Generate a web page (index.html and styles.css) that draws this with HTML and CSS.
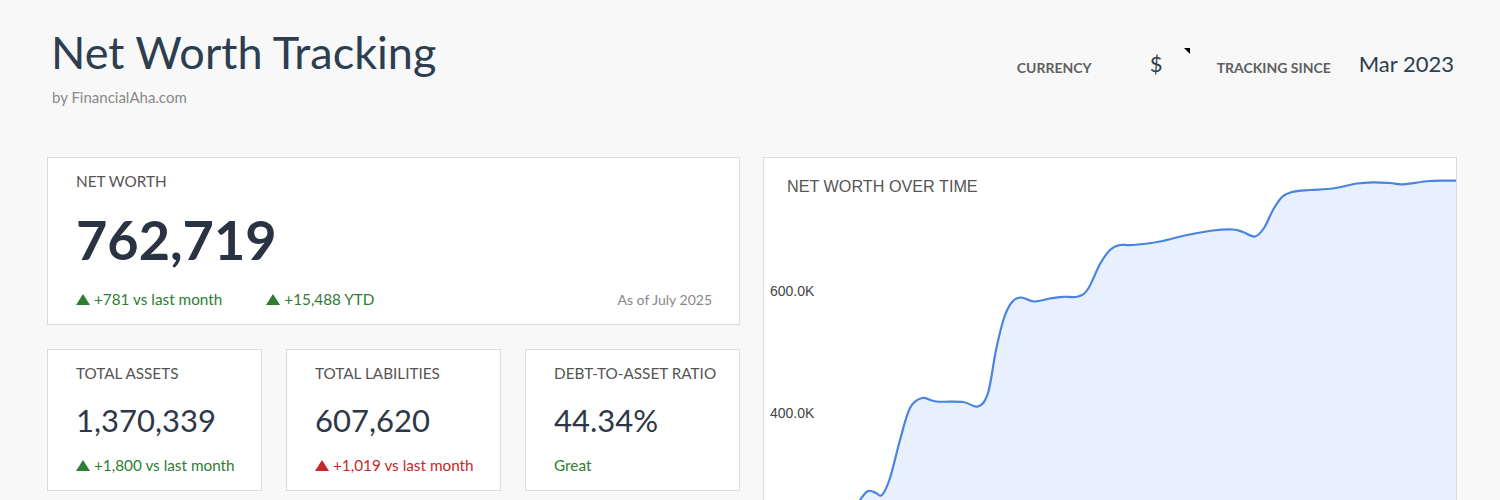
FILE: index.html
```html
<!DOCTYPE html>
<html lang="en">
<head>
  <meta charset="UTF-8">
  <title>Net Worth Tracking | FinancialAha</title>
  <meta name="viewport" content="width=device-width, initial-scale=1.0">
  <link rel="stylesheet" href="styles.css">
</head>
<body>

<header class="top">
  <div class="brand">
    <h1>Net Worth Tracking</h1>
    <p class="byline">by FinancialAha.com</p>
  </div>
  <div class="settings">
    <span class="setting-label">Currency</span>
    <span class="setting-select">$<i class="marker"></i></span>
    <span class="setting-label">Tracking since</span>
    <span class="setting-value">Mar 2023</span>
  </div>
</header>

<main class="dashboard">
  <div class="left-col">
    <section class="card card-main">
      <div class="card-label">Net Worth</div>
      <div class="big-value">762,719</div>
      <div class="stats">
        <span class="change up"><i class="tri"></i>+781 vs last month</span>
        <span class="change up"><i class="tri"></i>+15,488 YTD</span>
        <span class="as-of">As of July 2025</span>
      </div>
    </section>

    <div class="mini-row">
      <section class="card card-mini">
        <div class="card-label">Total Assets</div>
        <div class="mid-value">1,370,339</div>
        <div class="change up"><i class="tri"></i>+1,800 vs last month</div>
      </section>
      <section class="card card-mini">
        <div class="card-label">Total Labilities</div>
        <div class="mid-value">607,620</div>
        <div class="change bad"><i class="tri"></i>+1,019 vs last month</div>
      </section>
      <section class="card card-mini">
        <div class="card-label">Debt-to-Asset Ratio</div>
        <div class="mid-value">44.34%</div>
        <div class="change up">Great</div>
      </section>
    </div>
  </div>

  <section class="card card-chart">
    <svg class="chart" id="chart" width="692" height="400" viewBox="764 158 692 400">
      <path id="area" class="chart-area" d=""></path>
      <path id="line" class="chart-line" d=""></path>
      <text class="axis" x="770" y="296">600.0K</text>
      <text class="axis" x="770" y="418">400.0K</text>
    </svg>
    <h2 class="chart-title">NET WORTH OVER TIME</h2>
  </section>
</main>

<script>
// points traced in page coordinates (viewBox matches the page)
const pts = [
  [820, 640], [840, 560], [852, 515], [860, 500], [868, 491], [876, 493], [882, 495],
  [890, 478], [900, 440], [910, 408], [922, 398], [936, 401.5], [963, 402],
  [978, 406.5], [988, 393], [996, 350], [1004, 318], [1012, 302], [1021, 297.5],
  [1034, 301.5], [1050, 298.5], [1063, 296.8], [1078, 296.5], [1088, 289],
  [1100, 264], [1110, 250], [1120, 245], [1133, 245], [1160, 241.5], [1187, 235],
  [1213, 230.5], [1233, 229.5], [1243, 232], [1255, 236.5], [1264, 228],
  [1273, 210], [1282, 197], [1292, 192], [1310, 190], [1333, 188.5], [1357, 183.5],
  [1373, 182.3], [1390, 183], [1403, 184.3], [1430, 181], [1457, 180.7], [1480, 180.5]
];

function smoothPath(p) {
  let d = `M${p[0][0]},${p[0][1]}`;
  for (let i = 0; i < p.length - 1; i++) {
    const p0 = p[i - 1] || p[i], p1 = p[i], p2 = p[i + 1], p3 = p[i + 2] || p2;
    const c1 = [p1[0] + (p2[0] - p0[0]) / 6, p1[1] + (p2[1] - p0[1]) / 6];
    const c2 = [p2[0] - (p3[0] - p1[0]) / 6, p2[1] - (p3[1] - p1[1]) / 6];
    d += ` C${c1[0].toFixed(1)},${c1[1].toFixed(1)} ${c2[0].toFixed(1)},${c2[1].toFixed(1)} ${p2[0]},${p2[1]}`;
  }
  return d;
}

const line = smoothPath(pts);
document.getElementById("line").setAttribute("d", line);
document.getElementById("area").setAttribute("d", line + " L1480,700 L820,700 Z");
</script>

</body>
</html>
```

FILE: styles.css
```css
body { margin: 0; font-family: Lato, "Open Sans", Arial, sans-serif; background: #f8f8f8; color: #2c3e50; }

.top { display: flex; justify-content: space-between; align-items: flex-start; padding: 25px 46px 0 51px; }
.top h1 { margin: 0; font-size: 45px; font-weight: 400; line-height: 1.2; color: #2c3e50; }
.byline { margin: 9px 0 0 1px; font-size: 15px; line-height: 1.2; color: #888; }

.settings { display: flex; align-items: baseline; margin-top: 26px; }
.setting-label { font-size: 14px; font-weight: 700; text-transform: uppercase; color: #5f5f5f; position: relative; top: 1px; }
.setting-select { position: relative; width: 40px; margin: 0 27px 0 58px; font-size: 22px; line-height: 26px; color: #2c3e50; }
.setting-select .marker {
  position: absolute; top: -3px; right: 0; width: 0; height: 0;
  border-top: 6px solid #000; border-left: 6px solid transparent;
}
.setting-value { margin-left: 28px; font-size: 22px; line-height: 26px; color: #2c3e50; }

.dashboard { display: grid; grid-template-columns: 693px 1fr; gap: 23px; padding: 51px 43px 0 47px; align-items: start; }
.left-col { display: flex; flex-direction: column; gap: 24px; }
.mini-row { display: grid; grid-template-columns: repeat(3, 1fr); gap: 24px; }

.card { background: #fff; border: 1px solid #dcdcdc; box-sizing: border-box; }
.card-main { padding: 14px 27px 16px 28px; }
.card-mini { padding: 14px 16px 16px 28px; }
.card-label { font-size: 15.3px; line-height: 1.2; text-transform: uppercase; color: #555; }

.big-value { margin-top: 18px; font-size: 54px; font-weight: 700; line-height: 1.2; color: #2a3342; }
.mid-value { margin-top: 19px; font-size: 31px; line-height: 1.2; color: #2d3748; }

.stats { display: flex; align-items: baseline; gap: 44px; margin-top: 17px; }
.change { font-size: 15.3px; line-height: 1.2; }
.card-mini .change { margin-top: 17px; }
.change.up { color: #2e7d32; }
.change.bad { color: #c62828; }
.tri {
  display: inline-block; width: 0; height: 0; margin-right: 4px;
  border-left: 7px solid transparent; border-right: 7px solid transparent;
  border-bottom: 11px solid currentColor;
}
.as-of { margin-left: auto; font-size: 14px; color: #888; }

.card-chart { display: grid; overflow: hidden; }
.card-chart > * { grid-area: 1 / 1; }
.chart { display: block; }
.chart-area { fill: #e8f0fd; }
.chart-line { fill: none; stroke: #4a84e0; stroke-width: 2.2; }
.axis { font-family: "Liberation Sans", Arial, sans-serif; font-size: 14px; fill: #444; }
.chart-title {
  align-self: start; margin: 0; padding: 19px 0 0 23px;
  font-family: "Liberation Sans", Arial, sans-serif; font-size: 16.2px; font-weight: 400;
  line-height: 18px; color: #555;
}
```
